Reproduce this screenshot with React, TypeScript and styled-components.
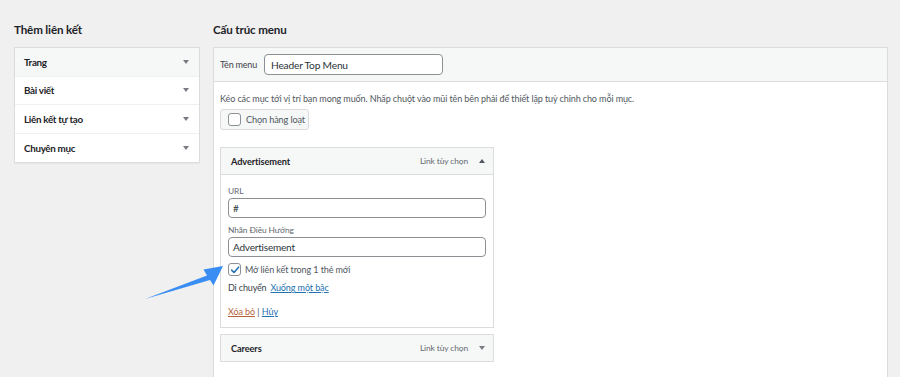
import styled, { createGlobalStyle } from "styled-components"

const GlobalStyle = createGlobalStyle`
   html, body {
      margin: 0;
      padding: 0;
      background: #f0f0f1;
   }
   body {
      font-family: Lato, "Noto Sans", sans-serif;
      color: #1d2327;
   }
   * {
      box-sizing: border-box;
   }
`

const StyledPage = styled.div`
   position: relative;
   width: 900px;
   height: 377px;
   overflow: hidden;
   display: grid;
   grid-template-columns: 186px 675px;
   column-gap: 13px;
   padding: 21px 0 0 14px;
`

const StyledColumn = styled.div`
   display: flex;
   flex-direction: column;
`

const StyledTitle = styled.h2`
   margin: 0 0 8px;
   font-size: 11.6px;
   font-weight: 700;
   letter-spacing: -0.15px;
   line-height: 18px;
   color: #1d2327;
`

const StyledAccordion = styled.div`
   background: #fff;
   border: 1px solid #dcdcde;
   box-shadow: 0 1px 1px rgba(0, 0, 0, 0.04);
`

const StyledAccordionRow = styled.div<{ $open?: boolean }>`
   display: flex;
   align-items: center;
   justify-content: space-between;
   height: 28.5px;
   padding: 0 9px;
   background: ${(p) => (p.$open ? "#f6f7f7" : "#fff")};
   border-bottom: 1px solid #f0f0f1;
   font-size: 9.8px;
   font-weight: 700;
   letter-spacing: -0.3px;
   color: #1d2327;
   &:last-child {
      border-bottom: none;
   }
`

const StyledCaret = styled.span<{ $up?: boolean }>`
   width: 0;
   height: 0;
   border-left: 3.5px solid transparent;
   border-right: 3.5px solid transparent;
   ${(p) => (p.$up ? "border-bottom: 4px solid #50575e;" : "border-top: 4px solid #787c82;")}
   margin-right: 1px;
`

const StyledPanel = styled.div`
   flex: 1;
   background: #fff;
   border: 1px solid #dcdcde;
   border-bottom: none;
   box-shadow: 0 1px 1px rgba(0, 0, 0, 0.04);
`

const StyledPanelHeader = styled.div`
   display: flex;
   align-items: center;
   gap: 7px;
   height: 34px;
   padding: 0 6px;
   background: #f6f7f7;
   border-bottom: 1px solid #dcdcde;
`

const StyledSmallLabel = styled.label`
   font-size: 9px;
   letter-spacing: -0.2px;
   color: #3c434a;
`

const StyledNameInput = styled.div`
   width: 179px;
   height: 21px;
   display: flex;
   align-items: center;
   padding: 0 6px;
   border: 1px solid #8c8f94;
   border-radius: 4px;
   background: #fff;
   font-size: 10.2px;
   letter-spacing: -0.2px;
   color: #2c3338;
`

const StyledPanelBody = styled.div`
   padding: 9px 6px;
`

const StyledDescription = styled.p`
   margin: 0 0 2px;
   font-size: 9px;
   letter-spacing: -0.1px;
   line-height: 16px;
   color: #50575e;
`

const StyledBulkButton = styled.div`
   display: inline-flex;
   align-items: center;
   gap: 5px;
   height: 21px;
   width: 89px;
   padding: 0 7px;
   white-space: nowrap;
   background: #f6f7f7;
   border: 1px solid #dcdcde;
   border-radius: 3px;
   font-size: 9.2px;
   letter-spacing: -0.15px;
   color: #50575e;
`

const StyledCheckbox = styled.span`
   display: inline-flex;
   align-items: center;
   justify-content: center;
   width: 13px;
   height: 13px;
   flex-shrink: 0;
   border: 1px solid #8c8f94;
   border-radius: 3px;
   background: #fff;
`

const StyledMenuList = styled.div`
   display: flex;
   flex-direction: column;
   gap: 6px;
   width: 274px;
   margin-top: 17px;
`

const StyledItemHeader = styled.div`
   display: flex;
   align-items: center;
   height: 28px;
   padding: 0 7px 0 10px;
   background: #f6f7f7;
   border: 1px solid #dcdcde;
`

const StyledItemTitle = styled.span`
   flex: 1;
   font-size: 9.2px;
   font-weight: 700;
   letter-spacing: -0.1px;
   color: #1d2327;
`

const StyledItemType = styled.span`
   font-size: 8.4px;
   letter-spacing: -0.1px;
   color: #646970;
   margin-right: 11px;
`

const StyledItemBody = styled.div`
   display: flex;
   flex-direction: column;
   padding: 10px 7px 10px;
   border: 1px solid #dcdcde;
   border-top: none;
   background: #fff;
`

const StyledFieldLabel = styled.span`
   font-size: 8.4px;
   letter-spacing: -0.1px;
   line-height: 13px;
   color: #646970;
`

const StyledFieldInput = styled.div`
   display: flex;
   align-items: center;
   height: 20px;
   padding: 0 4px;
   border: 1px solid #8c8f94;
   border-radius: 4px;
   font-size: 10px;
   letter-spacing: -0.2px;
   color: #2c3338;
   margin-bottom: 6px;
`

const StyledInlineRow = styled.div`
   display: flex;
   align-items: center;
   gap: 4px;
   height: 13px;
   font-size: 9px;
   letter-spacing: -0.1px;
   color: #50575e;
`

const StyledMoveRow = styled.div`
   display: flex;
   align-items: center;
   gap: 4px;
   margin-top: 6px;
   font-size: 9px;
   letter-spacing: -0.15px;
   color: #3c434a;
`

const StyledLink = styled.a<{ $danger?: boolean }>`
   color: ${(p) => (p.$danger ? "#b8613a" : "#2271b1")};
   text-decoration: underline;
   font-size: 9px;
   letter-spacing: -0.1px;
`

const StyledActions = styled.div`
   margin-top: 13px;
   font-size: 9px;
   color: #50575e;
`

const StyledArrow = styled.svg`
   position: absolute;
   left: 0;
   top: 0;
   pointer-events: none;
`

const Check = () => (
   <svg width="10" height="10" viewBox="0 0 10 10">
      <path d="M1.6 5.2 L4 7.5 L8.6 2.2" fill="none" stroke="#2271b1" strokeWidth="1.6" strokeLinecap="round" strokeLinejoin="round" />
   </svg>
)

const leftItems = ["Trang", "Bài viết", "Liên kết tự tạo", "Chuyên mục"]

export default function App() {
   return (
      <>
         <GlobalStyle />
         <StyledPage>
            <StyledColumn>
               <StyledTitle>Thêm liên kết</StyledTitle>
               <StyledAccordion>
                  {leftItems.map((item, i) => (
                     <StyledAccordionRow key={item} $open={i === 0}>
                        {item}
                        <StyledCaret />
                     </StyledAccordionRow>
                  ))}
               </StyledAccordion>
            </StyledColumn>

            <StyledColumn>
               <StyledTitle>Cấu trúc menu</StyledTitle>
               <StyledPanel>
                  <StyledPanelHeader>
                     <StyledSmallLabel>Tên menu</StyledSmallLabel>
                     <StyledNameInput>Header Top Menu</StyledNameInput>
                  </StyledPanelHeader>
                  <StyledPanelBody>
                     <StyledDescription>
                        Kéo các mục tới vị trí bạn mong muốn. Nhấp chuột vào mũi tên bên phải để thiết lập tuỳ chỉnh cho mỗi mục.
                     </StyledDescription>
                     <StyledBulkButton>
                        <StyledCheckbox />
                        Chọn hàng loạt
                     </StyledBulkButton>

                     <StyledMenuList>
                        <div>
                           <StyledItemHeader>
                              <StyledItemTitle>Advertisement</StyledItemTitle>
                              <StyledItemType>Link tùy chọn</StyledItemType>
                              <StyledCaret $up />
                           </StyledItemHeader>
                           <StyledItemBody>
                              <StyledFieldLabel>URL</StyledFieldLabel>
                              <StyledFieldInput>#</StyledFieldInput>
                              <StyledFieldLabel>Nhãn Điều Hướng</StyledFieldLabel>
                              <StyledFieldInput>Advertisement</StyledFieldInput>
                              <StyledInlineRow>
                                 <StyledCheckbox>
                                    <Check />
                                 </StyledCheckbox>
                                 Mở liên kết trong 1 thẻ mới
                              </StyledInlineRow>
                              <StyledMoveRow>
                                 Di chuyển
                                 <StyledLink>Xuống một bậc</StyledLink>
                              </StyledMoveRow>
                              <StyledActions>
                                 <StyledLink $danger>Xóa bỏ</StyledLink> | <StyledLink>Hủy</StyledLink>
                              </StyledActions>
                           </StyledItemBody>
                        </div>
                        <StyledItemHeader>
                           <StyledItemTitle>Careers</StyledItemTitle>
                           <StyledItemType>Link tùy chọn</StyledItemType>
                           <StyledCaret />
                        </StyledItemHeader>
                     </StyledMenuList>
                  </StyledPanelBody>
               </StyledPanel>
            </StyledColumn>

            <StyledArrow width="900" height="377" viewBox="0 0 900 377">
               <path
                  d="M145 299 L207 275.5 L203.5 269.5 L223 266 L213.5 285.5 L210 280 Z"
                  fill="#3a8df2"
               />
            </StyledArrow>
         </StyledPage>
      </>
   )
}
